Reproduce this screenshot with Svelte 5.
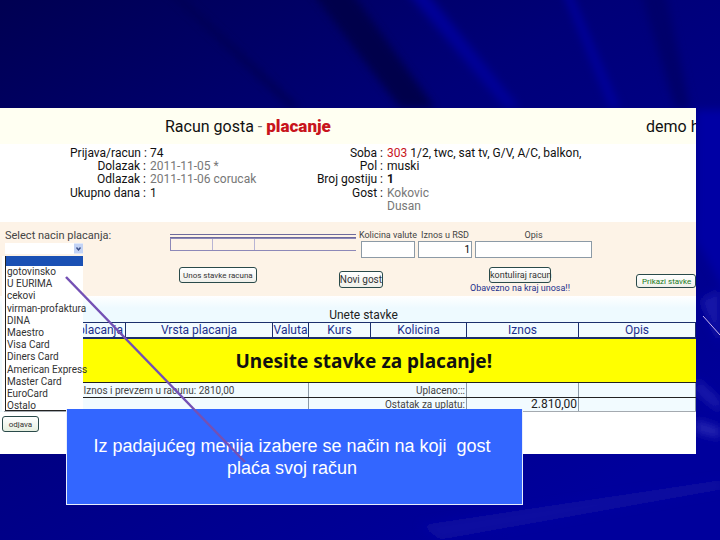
<script>
    let infoLeft = [
        { label: "Prijava/racun", value: "74" },
        { label: "Dolazak", value: "2011-11-05 *" },
        { label: "Odlazak", value: "2011-11-06 corucak" },
        { label: "Ukupno dana", value: "1" },
    ];
    let paymentTypes = [
        "gotovinsko",
        "U EURIMA",
        "cekovi",
        "virman-profaktura",
        "DINA",
        "Maestro",
        "Visa Card",
        "Diners Card",
        "American Express",
        "Master Card",
        "EuroCard",
        "Ostalo",
    ];
    let columns = ["placanja", "Vrsta placanja", "Valuta", "Kurs", "Kolicina", "Iznos", "Opis"];
</script>

<div class="slide">
    <svg class="backdrop" viewBox="0 0 720 540" aria-hidden="true">
        <defs>
            <linearGradient id="bg" x1="0" y1="0" x2="0.7" y2="1">
                <stop offset="0" stop-color="#000052" />
                <stop offset="0.4" stop-color="#000078" />
                <stop offset="1" stop-color="#00009c" />
            </linearGradient>
            <filter id="soft"><feGaussianBlur stdDeviation="4" /></filter>
        </defs>
        <rect width="720" height="540" fill="url(#bg)" />
        <g filter="url(#soft)">
            <polygon points="310,-10 350,-10 435,108 400,108" fill="#00004c" />
            <polygon points="165,-10 175,-10 300,108 290,108" fill="#000054" />
            <polygon points="405,-10 425,-10 520,108 505,108" fill="#000098" />
            <polygon points="640,-10 665,-10 690,108 675,108" fill="#00006a" />
            <polygon points="562,-10 570,-10 620,108 610,108" fill="#00009c" />
            <polygon points="696,110 730,110 730,300 696,240" fill="#0000a4" />
            <polygon points="700,300 720,290 720,345" fill="#1212a8" />
            <polygon points="696,378 720,400 720,412 696,392" fill="#1a1aac" />
            <polygon points="696,420 720,428 720,438 696,432" fill="#2626b2" />
            <polygon points="420,525 720,480 720,490 440,540" fill="#0808a0" />
        </g>
    </svg>

    <div class="shot">
        <header class="head">
            <h1>Racun gosta <span class="dash">-</span> <b>placanje</b></h1>
            <span class="demo">demo h</span>
        </header>

        <section class="info">
            <dl class="facts left">
                {#each infoLeft as row}
                    <dt>{row.label} :</dt>
                    <dd>{row.value}</dd>
                {/each}
            </dl>
            <dl class="facts right">
                <dt>Soba :</dt>
                <dd><span class="red">303</span> 1/2, twc, sat tv, G/V, A/C, balkon,</dd>
                <dt>Pol :</dt>
                <dd>muski</dd>
                <dt>Broj gostiju :</dt>
                <dd><b>1</b></dd>
                <dt>Gost :</dt>
                <dd class="pale">Kokovic<br />Dusan</dd>
            </dl>
        </section>

        <section class="form">
            <div class="form-top">
                <div class="select-box">
                    <span>Select nacin placanja:</span>
                    <div class="select">
                        <svg class="chevron" viewBox="0 0 9 10" aria-hidden="true">
                            <rect width="9" height="10" fill="#c3d3f5" />
                            <path d="M2.5 4 L4.5 6.5 L6.5 4" fill="none" stroke="#3a4d86" stroke-width="1.4" />
                        </svg>
                    </div>
                </div>
                <div class="mini">
                    <div class="mini-bar"></div>
                    <div class="mini-cells"><i></i><i></i><i></i></div>
                </div>
                <div class="inputs">
                    <label class="w54">Kolicina valute<input /></label>
                    <label class="w54">Iznos u RSD<input value="1" class="num" /></label>
                    <label class="w117">Opis<input /></label>
                </div>
            </div>
            <div class="form-actions">
                <button class="b1">Unos stavke racuna</button>
                <button class="b2">Novi gost</button>
                <div class="confirm">
                    <button class="b3">kontuliraj racun</button>
                    <span>Obavezno na kraj unosa!!</span>
                </div>
                <button class="b4">Prikazi stavke</button>
            </div>
        </section>

        <section class="items">
            <h2>Unete stavke</h2>
            <table>
                <colgroup>
                    <col style="width:122px" /><col style="width:147px" /><col style="width:36px" />
                    <col style="width:62px" /><col style="width:96px" /><col style="width:112px" /><col />
                </colgroup>
                <thead>
                    <tr>
                        {#each columns as col, i}
                            <th class:end={i === 0}>{col}</th>
                        {/each}
                    </tr>
                </thead>
                <tbody>
                    <tr class="notice"><td colspan="7"><span>Unesite stavke za placanje!</span></td></tr>
                    <tr class="sum">
                        <td colspan="3" class="first">Iznos i prevzem u racunu: 2810,00</td>
                        <td colspan="2" class="r">Uplaceno:::</td>
                        <td></td>
                        <td></td>
                    </tr>
                    <tr class="sum last">
                        <td colspan="3"></td>
                        <td colspan="2" class="r">Ostatak za uplatu:</td>
                        <td class="r big">2.810,00</td>
                        <td></td>
                    </tr>
                </tbody>
            </table>
        </section>

        <ul class="dropdown">
            <li class="active">&nbsp;</li>
            {#each paymentTypes as name}
                <li>{name}</li>
            {/each}
        </ul>
        <button class="quit">odjava</button>
    </div>

    <div class="callout">Iz padajućeg menija izabere se način na koji&nbsp; gost plaća svoj račun</div>

    <svg class="lines" viewBox="0 0 720 540" aria-hidden="true">
        <line x1="66" y1="277" x2="245" y2="462" stroke="#7450b4" stroke-width="2.5" />
        <line x1="703" y1="316" x2="720" y2="335" stroke="#c9b6ee" stroke-width="1" />
    </svg>
</div>

<style>
    :global(body) {
        margin: 0;
    }

    .slide {
        position: relative;
        width: 720px;
        height: 540px;
        padding-top: 108px;
        box-sizing: border-box;
        overflow: hidden;
        font-family: Roboto, "Noto Sans", sans-serif;
        color: #111;
    }

    .backdrop,
    .lines {
        position: absolute;
        left: 0;
        top: 0;
        width: 720px;
        height: 540px;
    }

    .lines {
        pointer-events: none;
    }

    .shot {
        position: relative;
        width: 696px;
        height: 346px;
        background: #fff;
        overflow: hidden;
    }

    .head {
        height: 36px;
        background: #fffff2;
        display: flex;
        align-items: center;
        padding-left: 165px;
        white-space: nowrap;
    }

    .head h1 {
        margin: 0;
        flex: none;
        font-size: 16px;
        font-weight: 400;
        width: 481px;
    }

    .head b {
        color: #c8141c;
        font-size: 17px;
        font-weight: 900;
    }

    .dash {
        color: #777;
    }

    .demo {
        font-size: 16px;
    }

    .info {
        height: 78px;
        display: flex;
        font-size: 12px;
        line-height: 13.2px;
        padding-top: 3px;
        box-sizing: border-box;
    }

    .facts {
        display: grid;
        justify-content: start;
        column-gap: 4px;
        margin: 0;
        align-content: start;
        white-space: nowrap;
    }

    .facts dt {
        text-align: right;
    }

    .facts dd {
        margin: 0;
    }

    .left {
        grid-template-columns: 76px auto;
        width: 230px;
        padding-left: 70px;
    }

    .right {
        grid-template-columns: 70px auto;
        margin-left: 13px;
    }

    .left dd:nth-of-type(2),
    .left dd:nth-of-type(3),
    .pale {
        color: #777;
    }

    .red {
        color: #c8141c;
    }

    .form {
        height: 74px;
        background: #fdf3e7;
        font-size: 10px;
        color: #444;
        box-sizing: border-box;
        padding: 7px 0 0 5px;
    }

    .form-top {
        display: flex;
        height: 30px;
    }

    .select-box {
        width: 165px;
        font-size: 11px;
        line-height: 14px;
    }

    .select {
        width: 78px;
        height: 11px;
        background: #fff;
        display: flex;
        justify-content: flex-end;
    }

    .chevron {
        width: 9px;
        height: 11px;
    }

    .mini {
        width: 186px;
        margin-top: 5px;
    }

    .mini-bar {
        height: 2px;
        border-top: 1px solid #6e6a9c;
        border-bottom: 1px solid #6e6a9c;
    }

    .mini-cells {
        display: flex;
        height: 13px;
        border: 1px solid #8d88b8;
        border-right: 0;
        box-sizing: border-box;
    }

    .mini-cells i {
        width: 41px;
        border-right: 1px solid #b8b4d4;
    }

    .mini-cells i:last-child {
        width: 100px;
        border-right: 0;
    }

    .inputs {
        display: flex;
        gap: 3px;
        margin-left: 5px;
        padding-top: 1px;
    }

    .inputs label {
        display: flex;
        flex-direction: column;
        align-items: center;
        line-height: 11px;
        font-size: 9px;
        white-space: nowrap;
    }

    .inputs input {
        box-sizing: border-box;
        width: 100%;
        height: 17px;
        border: 1px solid #8c9aa6;
        padding: 0 1px;
        margin: 0;
        background: #fff;
        font-size: 10px;
        font-family: inherit;
    }

    .num {
        text-align: right;
    }

    .w54 {
        width: 54px;
    }

    .w117 {
        width: 117px;
    }

    .form-actions {
        display: flex;
        align-items: flex-start;
        margin-top: 8px;
        padding-left: 174px;
    }

    button {
        box-sizing: border-box;
        background: linear-gradient(#fff, #f0f0ea);
        border: 1px solid #2a4a4a;
        border-radius: 3px;
        padding: 0;
        font-family: inherit;
        font-size: 8px;
        color: #333;
        white-space: nowrap;
    }

    .b1 {
        width: 80px;
        height: 16px;
    }

    .b2 {
        width: 45px;
        height: 17px;
        margin: 4px 0 0 82px;
        font-size: 10px;
    }

    .confirm {
        display: flex;
        flex-direction: column;
        align-items: center;
        margin-left: 86px;
        width: 105px;
        color: #1c2f8c;
        font-size: 9px;
        line-height: 11px;
        white-space: nowrap;
    }

    .b3 {
        width: 62px;
        height: 16px;
        font-size: 9px;
    }

    .b4 {
        width: 60px;
        height: 14px;
        margin: 7px 0 0 65px;
        flex: none;
        color: #1a7a1a;
        font-size: 8px;
        text-align: left;
        padding-left: 5px;
    }

    .items {
        background: linear-gradient(#fff, #eefaff 12px);
        padding: 12px 0 0 3px;
    }

    h2 {
        margin: 0;
        height: 14px;
        padding-left: 28px;
        text-align: center;
        font-size: 12px;
        line-height: 14px;
        font-weight: 400;
        color: #222;
    }

    table {
        width: 693px;
        table-layout: fixed;
        border-collapse: collapse;
        font-size: 12px;
    }

    th {
        height: 14px;
        padding: 0;
        border: 1px solid #1c2f6c;
        border-width: 1px 1px 2px;
        font-weight: 400;
        color: #1c2f8c;
        line-height: 14px;
        background: #f2fbff;
    }

    th.end {
        text-align: right;
        padding-right: 2px;
    }

    .notice td {
        height: 43px;
        padding: 0 0 0 232px;
        background: #ffff00;
        border-bottom: 1px solid #222;
        font-family: "Noto Sans", sans-serif;
        font-size: 19px;
        font-weight: 700;
        color: #111;
    }

    .sum td {
        height: 14px;
        padding: 0 1px;
        background: #f2fbff;
        border-right: 1px solid #8c9aa6;
        border-bottom: 1px solid #222;
        font-size: 10px;
        line-height: 13px;
        color: #444;
        white-space: nowrap;
    }

    .sum td.first {
        padding-left: 80px;
    }

    .last td {
        height: 12px;
        border-bottom: 1px solid #a4aab0;
    }

    .r {
        text-align: right;
    }

    .sum td.big {
        font-size: 12px;
        color: #222;
    }

    .dropdown {
        position: absolute;
        left: 5px;
        top: 148px;
        width: 78px;
        height: 155px;
        margin: 0;
        padding: 0;
        list-style: none;
        background: #fff;
        border-left: 1px solid #222;
        border-bottom: 1px solid #222;
        box-shadow: -3px 0 0 #fff;
        box-sizing: border-box;
        font-size: 10px;
        color: #333;
    }

    .dropdown li {
        height: 12.2px;
        line-height: 12.2px;
        padding-left: 1px;
        white-space: nowrap;
    }

    .dropdown .active {
        height: 10px;
        background: #1a50b4;
    }

    .quit {
        position: absolute;
        left: 2px;
        top: 308px;
        width: 37px;
        height: 16px;
        font-size: 8px;
        background: linear-gradient(#fff, #e6efe0);
    }

    .callout {
        position: absolute;
        left: 66px;
        top: 409px;
        width: 457px;
        height: 96px;
        box-sizing: border-box;
        display: flex;
        align-items: center;
        justify-content: center;
        text-align: center;
        padding: 0 25px 0 20px;
        background: #3366ff;
        border: 1px solid #e8eefc;
        border-width: 0 1px 1px;
        font-family: "Liberation Sans", Arial, sans-serif;
        font-size: 18px;
        line-height: 22px;
        color: #fff;
    }
</style>
